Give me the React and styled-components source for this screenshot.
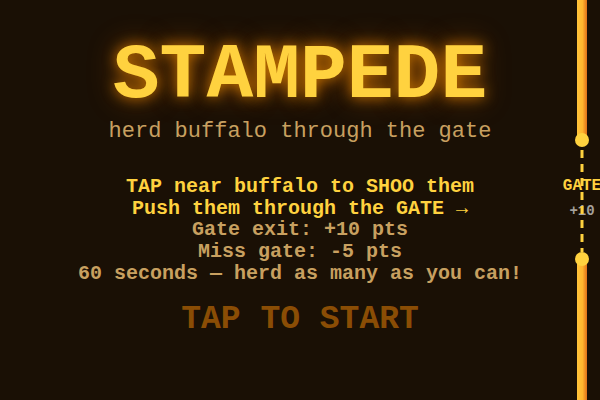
import React from "react";
import styled, { createGlobalStyle } from "styled-components";

const MONO = `"Courier New", Courier, "Nimbus Mono PS", "Liberation Mono", monospace`;

const Global = createGlobalStyle`
  html, body { margin: 0; padding: 0; background: #1a1005; }
  body { width: 600px; height: 400px; overflow: hidden; }
`;

const Screen = styled.div`
  position: relative;
  width: 600px;
  height: 400px;
  background: #1a1005;
  overflow: hidden;
  font-family: ${MONO};
  font-weight: bold;
  display: flex;
  flex-direction: column;
  align-items: center;
`;

const Title = styled.h1`
  margin: 36px 0 0;
  font-size: 78px;
  line-height: 80px;
  color: #ffd23f;
  text-shadow: 0 0 14px rgba(255, 150, 0, 0.75), 0 0 30px rgba(255, 120, 0, 0.4);
`;

const Subtitle = styled.div`
  margin-top: 2px;
  font-size: 22px;
  font-weight: normal;
  line-height: 28px;
  color: #c8a060;
`;

const Instructions = styled.div`
  margin-top: 30px;
  display: flex;
  flex-direction: column;
  align-items: center;
`;

const Line = styled.div`
  font-size: 20px;
  line-height: 21.7px;
  color: ${(p) => (p.$hot ? "#ffd23f" : "#c8a060")};
`;

const Start = styled.div`
  margin-top: 16px;
  font-size: 33px;
  line-height: 38px;
  color: #8a4d05;
`;

const Gate = styled.div`
  position: absolute;
  top: 0;
  left: 560px;
  width: 44px;
  height: 400px;
`;

const GateSvg = styled.svg`
  position: absolute;
  left: 0;
  top: 0;
  z-index: 1;
`;

const GateName = styled.div`
  position: absolute;
  left: 0;
  width: 44px;
  top: 178px;
  z-index: 2;
  text-align: center;
  font-size: 16px;
  line-height: 1;
  color: #ffd23f;
  white-space: nowrap;
`;

const GatePoints = styled.div`
  position: absolute;
  left: 0;
  width: 44px;
  top: 204px;
  z-index: 0;
  text-align: center;
  font-size: 14px;
  line-height: 1;
  color: #a5a09a;
  white-space: nowrap;
`;

function GateArt() {
  return (
    <GateSvg width="44" height="400" viewBox="0 0 44 400">
      <defs>
        <linearGradient id="bar" x1="0" x2="1" y1="0" y2="0">
          <stop offset="0" stopColor="#ffc43a" />
          <stop offset="0.55" stopColor="#ffb52e" />
          <stop offset="1" stopColor="#e0701a" />
        </linearGradient>
      </defs>
      <rect x="17" y="0" width="10" height="140" fill="url(#bar)" />
      <rect x="17" y="259" width="10" height="141" fill="url(#bar)" />
      <line x1="22" y1="150" x2="22" y2="252" stroke="#ffd23f" strokeWidth="3" strokeDasharray="8 6" />
      <circle cx="22" cy="140" r="7" fill="#ffd23f" />
      <circle cx="22" cy="259" r="7" fill="#ffd23f" />
    </GateSvg>
  );
}

export default function App() {
  return (
    <>
      <Global />
      <Screen>
        <Title>STAMPEDE</Title>
        <Subtitle>herd buffalo through the gate</Subtitle>
        <Instructions>
          <Line $hot>TAP near buffalo to SHOO them</Line>
          <Line $hot>Push them through the GATE →</Line>
          <Line>Gate exit: +10 pts</Line>
          <Line>Miss gate: -5 pts</Line>
          <Line>60 seconds — herd as many as you can!</Line>
        </Instructions>
        <Start>TAP TO START</Start>
        <Gate>
          <GateArt />
          <GateName>GATE</GateName>
          <GatePoints>+10</GatePoints>
        </Gate>
      </Screen>
    </>
  );
}
